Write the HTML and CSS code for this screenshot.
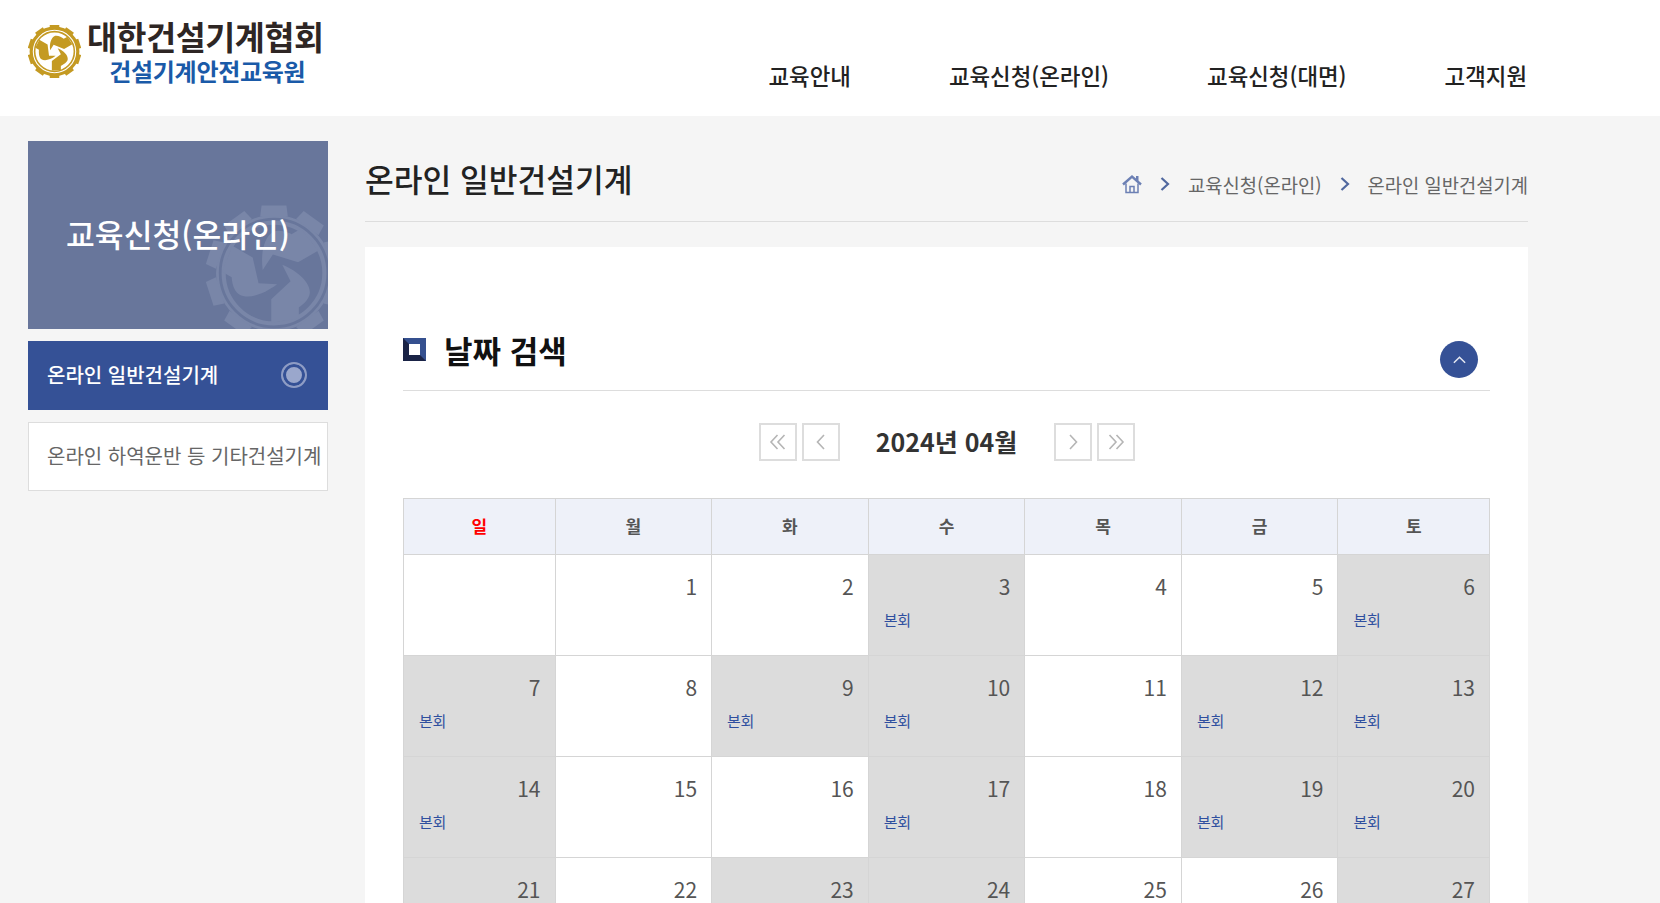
FILE: index.html
```html
<!DOCTYPE html>
<html lang="ko">
<head>
    <meta charset="UTF-8">
    <title>온라인 일반건설기계</title>
    <link rel="stylesheet" href="styles.css">
</head>
<body>
    <header class="top-header">
        <a class="logo" href="#">
            <svg class="logo-mark" viewBox="0 0 100 100">
                <g fill="#c49a22">
                    <circle cx="50" cy="50" r="37.5" fill="none" stroke="#c49a22" stroke-width="3"/>
                    <circle cx="50" cy="50" r="44" fill="none" stroke="#c49a22" stroke-width="6"/>
                    <rect x="41" y="0" width="18" height="8"/>
                    <rect x="41" y="0" width="18" height="8" transform="rotate(36 50 50)"/>
                    <rect x="41" y="0" width="18" height="8" transform="rotate(72 50 50)"/>
                    <rect x="41" y="0" width="18" height="8" transform="rotate(108 50 50)"/>
                    <rect x="41" y="0" width="18" height="8" transform="rotate(144 50 50)"/>
                    <rect x="41" y="0" width="18" height="8" transform="rotate(180 50 50)"/>
                    <rect x="41" y="0" width="18" height="8" transform="rotate(216 50 50)"/>
                    <rect x="41" y="0" width="18" height="8" transform="rotate(252 50 50)"/>
                    <rect x="41" y="0" width="18" height="8" transform="rotate(288 50 50)"/>
                    <rect x="41" y="0" width="18" height="8" transform="rotate(324 50 50)"/>
                    <path d="M45 86V68L62 55L56 44C68 49 75 57 75 64C75 70 66 75 62 77V85Z"/>
                    <path d="M45 86V68L62 55L56 44C68 49 75 57 75 64C75 70 66 75 62 77V85Z" transform="rotate(120 50 50)"/>
                    <path d="M45 86V68L62 55L56 44C68 49 75 57 75 64C75 70 66 75 62 77V85Z" transform="rotate(240 50 50)"/>
                </g>
            </svg>
            <span class="logo-text">
                <strong class="logo-name">대한건설기계협회</strong>
                <span class="logo-sub">건설기계안전교육원</span>
            </span>
        </a>
        <nav class="gnb">
            <a href="#">교육안내</a>
            <a href="#">교육신청(온라인)</a>
            <a href="#">교육신청(대면)</a>
            <a href="#">고객지원</a>
        </nav>
    </header>

    <div class="wrap">
        <aside class="side">
            <div class="side-title">
                <svg class="side-mark" viewBox="0 0 100 100">
                    <g fill="#7986a8">
                        <circle cx="50" cy="50" r="36.5" fill="none" stroke="#7986a8" stroke-width="3"/>
                        <circle cx="50" cy="50" r="41" fill="none" stroke="#7986a8" stroke-width="2"/>
                        <path d="M41 1H59L60 9H40Z"/>
                        <path d="M41 1H59L60 9H40Z" transform="rotate(36 50 50)"/>
                        <path d="M41 1H59L60 9H40Z" transform="rotate(72 50 50)"/>
                        <path d="M41 1H59L60 9H40Z" transform="rotate(108 50 50)"/>
                        <path d="M41 1H59L60 9H40Z" transform="rotate(144 50 50)"/>
                        <path d="M41 1H59L60 9H40Z" transform="rotate(180 50 50)"/>
                        <path d="M41 1H59L60 9H40Z" transform="rotate(216 50 50)"/>
                        <path d="M41 1H59L60 9H40Z" transform="rotate(252 50 50)"/>
                        <path d="M41 1H59L60 9H40Z" transform="rotate(288 50 50)"/>
                        <path d="M41 1H59L60 9H40Z" transform="rotate(324 50 50)"/>
                        <path d="M48 86V69L62 56L56 44C68 49 76 57 76 64C76 70 68 75 68 75V83Z"/>
                        <path d="M48 86V69L62 56L56 44C68 49 76 57 76 64C76 70 68 75 68 75V83Z" transform="rotate(120 50 50)"/>
                        <path d="M48 86V69L62 56L56 44C68 49 76 57 76 64C76 70 68 75 68 75V83Z" transform="rotate(240 50 50)"/>
                    </g>
                </svg>
                <h2>교육신청(온라인)</h2>
            </div>
            <a class="side-item active" href="#">
                온라인 일반건설기계
                <span class="side-dot"></span>
            </a>
            <a class="side-item" href="#">온라인 하역운반 등 기타건설기계</a>
        </aside>

        <main class="content">
            <div class="page-head">
                <h1>온라인 일반건설기계</h1>
                <div class="crumbs">
                    <svg class="crumb-home" viewBox="0 0 20 20">
                        <path d="M1 10.5L10 2.5L19 10.5" fill="none" stroke="#6c80b4" stroke-width="2.4"/>
                        <path d="M4 9.5V18.5H16V9.5M8 18.5V12.5H12V18.5" fill="none" stroke="#6c80b4" stroke-width="1.5"/>
                        <path d="M14 2H16.5V7L14 5Z" fill="#6c80b4"/>
                    </svg>
                    <svg class="crumb-sep" viewBox="0 0 10 14"><path d="M1.5 1L8 7L1.5 13" fill="none" stroke="#51689f" stroke-width="2.2"/></svg>
                    <span>교육신청(온라인)</span>
                    <svg class="crumb-sep" viewBox="0 0 10 14"><path d="M1.5 1L8 7L1.5 13" fill="none" stroke="#51689f" stroke-width="2.2"/></svg>
                    <span>온라인 일반건설기계</span>
                </div>
            </div>

            <section class="card">
                <div class="section-head">
                    <span class="section-icon"></span>
                    <h3>날짜 검색</h3>
                    <button class="collapse-btn" type="button">
                        <svg viewBox="0 0 16 10"><path d="M2 8L8 2L14 8" fill="none" stroke="#e6e9f2" stroke-width="1.6"/></svg>
                    </button>
                </div>

                <div class="month-nav">
                    <button class="month-btn" type="button"><svg viewBox="0 0 20 20"><path d="M9.5 3L3 10L9.5 17M16.5 3L10 10L16.5 17" fill="none" stroke="#b5b5b5" stroke-width="1.6"/></svg></button>
                    <button class="month-btn" type="button"><svg viewBox="0 0 20 20"><path d="M13 3L6.5 10L13 17" fill="none" stroke="#b5b5b5" stroke-width="1.6"/></svg></button>
                    <strong class="month-label">2024년 04월</strong>
                    <button class="month-btn" type="button"><svg viewBox="0 0 20 20"><path d="M7 3L13.5 10L7 17" fill="none" stroke="#b5b5b5" stroke-width="1.6"/></svg></button>
                    <button class="month-btn" type="button"><svg viewBox="0 0 20 20"><path d="M3.5 3L10 10L3.5 17M10.5 3L17 10L10.5 17" fill="none" stroke="#b5b5b5" stroke-width="1.6"/></svg></button>
                </div>

                <table class="calendar">
                    <colgroup>
                        <col class="col-edge"><col class="col-mid"><col class="col-mid"><col class="col-mid"><col class="col-mid"><col class="col-mid"><col class="col-edge">
                    </colgroup>
                    <thead>
                        <tr>
                            <th class="sun">일</th><th>월</th><th>화</th><th>수</th><th>목</th><th>금</th><th>토</th>
                        </tr>
                    </thead>
                    <tbody>
                        <tr>
                            <td></td>
                            <td><span class="day">1</span></td>
                            <td><span class="day">2</span></td>
                            <td class="closed"><span class="day">3</span><a href="#">본회</a></td>
                            <td><span class="day">4</span></td>
                            <td><span class="day">5</span></td>
                            <td class="closed"><span class="day">6</span><a href="#">본회</a></td>
                        </tr>
                        <tr>
                            <td class="closed"><span class="day">7</span><a href="#">본회</a></td>
                            <td><span class="day">8</span></td>
                            <td class="closed"><span class="day">9</span><a href="#">본회</a></td>
                            <td class="closed"><span class="day">10</span><a href="#">본회</a></td>
                            <td><span class="day">11</span></td>
                            <td class="closed"><span class="day">12</span><a href="#">본회</a></td>
                            <td class="closed"><span class="day">13</span><a href="#">본회</a></td>
                        </tr>
                        <tr>
                            <td class="closed"><span class="day">14</span><a href="#">본회</a></td>
                            <td><span class="day">15</span></td>
                            <td><span class="day">16</span></td>
                            <td class="closed"><span class="day">17</span><a href="#">본회</a></td>
                            <td><span class="day">18</span></td>
                            <td class="closed"><span class="day">19</span><a href="#">본회</a></td>
                            <td class="closed"><span class="day">20</span><a href="#">본회</a></td>
                        </tr>
                        <tr>
                            <td class="closed"><span class="day">21</span></td>
                            <td><span class="day">22</span></td>
                            <td class="closed"><span class="day">23</span></td>
                            <td class="closed"><span class="day">24</span></td>
                            <td><span class="day">25</span></td>
                            <td><span class="day">26</span></td>
                            <td class="closed"><span class="day">27</span></td>
                        </tr>
                    </tbody>
                </table>
            </section>
        </main>
    </div>
</body>
</html>
```

FILE: styles.css
```css
* {
    box-sizing: border-box;
}
html, body {
    height: 100%;
    overflow: hidden;
}
body {
    margin: 0;
    font-family: "Noto Sans CJK KR", "Noto Sans", sans-serif;
    background: #f5f5f5;
    color: #333;
}
a {
    color: inherit;
    text-decoration: none;
}
h1, h2, h3 {
    margin: 0;
}
button {
    padding: 0;
    cursor: pointer;
}

/* header */
.top-header {
    display: flex;
    justify-content: space-between;
    height: 116px;
    padding: 0 133px 0 28px;
    background: #fff;
}
.logo {
    display: flex;
    align-items: flex-start;
    padding-top: 22px;
}
.logo-mark {
    width: 53px;
    height: 53px;
    margin-top: 3px;
}
.logo-text {
    display: flex;
    flex-direction: column;
    align-items: center;
    margin-left: 6px;
    font-family: "Liberation Sans", "Noto Sans CJK KR", sans-serif;
}
.logo-name {
    font-size: 32.6px;
    line-height: 34px;
    font-weight: 700;
    letter-spacing: -0.4px;
    color: #2e2624;
}
.logo-sub {
    margin-left: 4px;
    font-size: 24px;
    line-height: 34px;
    font-weight: 700;
    letter-spacing: -0.3px;
    color: #1a5aa8;
}
.gnb {
    display: flex;
    gap: 98px;
    padding-top: 57px;
    font-size: 22.4px;
    line-height: 36px;
    font-weight: 500;
    color: #222;
}

/* layout */
.wrap {
    display: flex;
    align-items: flex-start;
    padding: 25px 0 0 28px;
}
.side {
    flex: none;
    width: 300px;
}
.side-title {
    position: relative;
    height: 188px;
    padding-bottom: 4px;
    overflow: hidden;
    background: #68769b;
    display: flex;
    align-items: center;
    justify-content: center;
}
.side-title h2 {
    position: relative;
    font-size: 31.3px;
    font-weight: 500;
    color: #fff;
}
.side-mark {
    position: absolute;
    left: 177px;
    top: 63px;
    width: 138px;
    height: 138px;
}
.side-item {
    display: flex;
    align-items: center;
    justify-content: space-between;
    height: 69px;
    margin-top: 12px;
    padding: 0 20px 2px 18px;
    font-size: 20px;
    white-space: nowrap;
    color: #666;
    background: #fff;
    border: 1px solid #ddd;
}
.side-item.active {
    color: #fff;
    font-weight: 500;
    background: #355196;
    border-color: #355196;
}
.side-dot {
    width: 26px;
    height: 26px;
    border-radius: 50%;
    border: 2px solid #8e9cc4;
    background: #9aa7cc;
    box-shadow: inset 0 0 0 3px #355196;
}

/* content */
.content {
    flex: none;
    width: 1163px;
    margin-left: 37px;
}
.page-head {
    display: flex;
    align-items: center;
    justify-content: space-between;
    height: 81px;
    padding-bottom: 6px;
    border-bottom: 1px solid #ddd;
}
.page-head h1 {
    font-size: 31.25px;
    font-weight: 500;
    color: #222;
}
.crumbs {
    display: flex;
    align-items: center;
    gap: 18px;
    padding-top: 12px;
    font-size: 18.75px;
    color: #666;
}
.crumb-home {
    width: 20px;
    height: 20px;
}
.crumb-sep {
    width: 10px;
    height: 14px;
}
.card {
    margin-top: 25px;
    padding: 0 38px;
    background: #fff;
}

/* section title */
.section-head {
    display: flex;
    align-items: center;
    height: 144px;
    padding-top: 62px;
    border-bottom: 1px solid #ddd;
}
.section-head h3 {
    margin-left: 18px;
    font-size: 31px;
    font-weight: 700;
    color: #111;
}
.section-icon {
    width: 23px;
    height: 23px;
    border: 6px solid #1a2346;
    border-top-color: #35508f;
    border-right-color: #35508f;
    background: #fff;
}
.collapse-btn {
    display: flex;
    align-items: center;
    justify-content: center;
    width: 38px;
    height: 37px;
    margin-left: auto;
    margin-right: 12px;
    margin-top: 20px;
    border: none;
    border-radius: 50%;
    background: #355196;
}
.collapse-btn svg {
    width: 15px;
    height: 10px;
}

/* month nav */
.month-nav {
    display: flex;
    align-items: center;
    justify-content: center;
    height: 107px;
    padding-bottom: 5px;
    gap: 5px;
}
.month-btn {
    display: flex;
    align-items: center;
    justify-content: center;
    width: 38px;
    height: 38px;
    border: 2px solid #ddd;
    background: #fff;
}
.month-btn svg {
    width: 20px;
    height: 20px;
}
.month-label {
    width: 204px;
    padding-bottom: 2px;
    text-align: center;
    font-size: 25px;
    font-weight: 700;
    color: #333;
}

/* calendar */
.calendar {
    width: 1086px;
    table-layout: fixed;
    border-collapse: collapse;
    font-size: 16px;
}
.col-edge {
    width: 151.5px;
}
.col-mid {
    width: 156.6px;
}
.calendar th, .calendar td {
    border: 1px solid #d5d5d5;
}
.calendar th {
    height: 56px;
    padding-bottom: 3px;
    font-size: 17px;
    font-weight: 700;
    color: #555;
    background: #eef1f9;
}
.calendar th.sun {
    color: #f00;
}
.calendar td {
    height: 101px;
    padding: 16px 14px 0 15px;
    vertical-align: top;
}
.calendar td.closed {
    background: #dcdcdc;
}
.day {
    display: block;
    text-align: right;
    font-size: 21px;
    line-height: 30px;
    color: #555;
}
.calendar td a {
    display: block;
    margin-top: 8px;
    font-size: 15px;
    line-height: 22px;
    letter-spacing: -0.3px;
    color: #2f4f9f;
}
```
